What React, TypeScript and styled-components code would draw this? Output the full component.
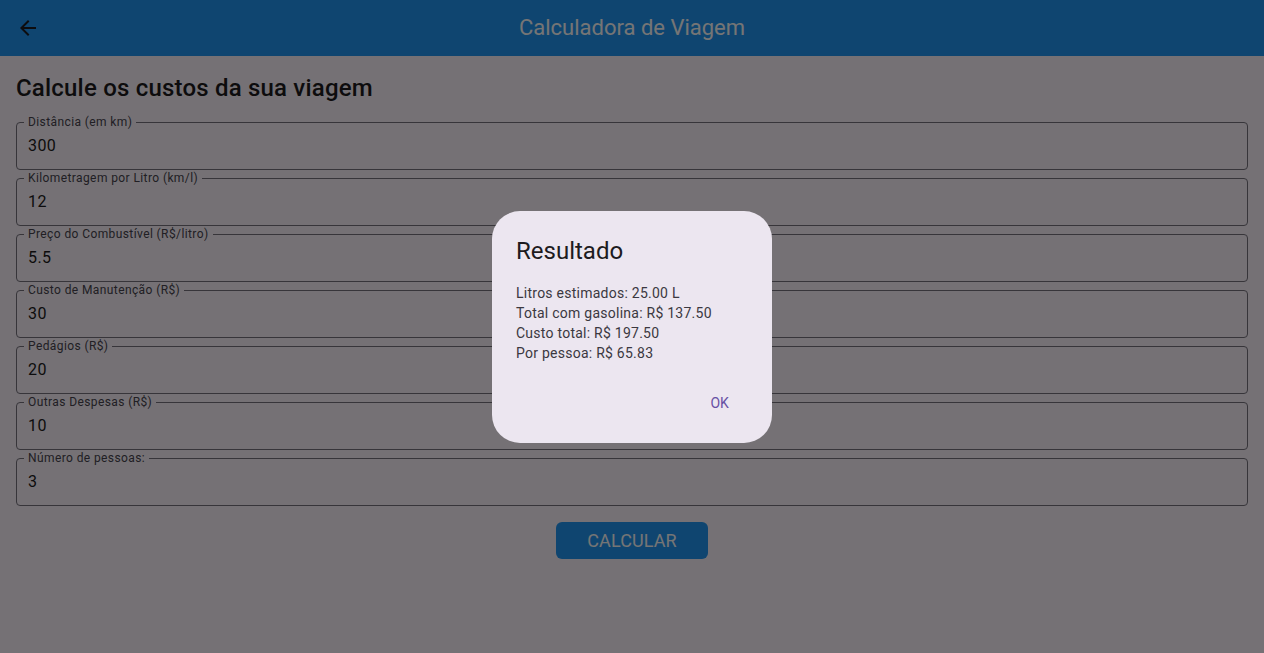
import React from "react";
import styled, { createGlobalStyle } from "styled-components";

const Global = createGlobalStyle`
  html, body { margin: 0; padding: 0; }
  body { font-family: Roboto, "Noto Sans", sans-serif; background: #fef7ff; }
  * { box-sizing: border-box; }
`;

const Page = styled.div`
  min-height: 100vh;
  background: #fef7ff;
  display: flex;
  flex-direction: column;
`;

const AppBar = styled.header`
  height: 56px;
  background: #2196f3;
  display: grid;
  grid-template-columns: 56px 1fr 56px;
  align-items: center;
`;

const BackButton = styled.div`
  width: 56px;
  height: 56px;
  display: flex;
  align-items: center;
  justify-content: center;
  color: #1d1b20;
`;

const AppTitle = styled.h1`
  margin: 0;
  text-align: center;
  font-size: 22px;
  font-weight: 400;
  line-height: 28px;
  color: #ffffff;
`;

const Content = styled.main`
  padding: 16px 16px 16px;
  display: flex;
  flex-direction: column;
`;

const Heading = styled.h2`
  margin: 0 0 10px;
  font-size: 24px;
  font-weight: 500;
  line-height: 32px;
  letter-spacing: 0.2px;
  color: #1d1b20;
`;

const Form = styled.div`
  display: flex;
  flex-direction: column;
`;

const Field = styled.fieldset`
  margin: 0;
  padding: 0 7px;
  border: 1px solid #79747e;
  border-radius: 4px;
`;

const Label = styled.legend`
  padding: 0 4px;
  font-size: 12px;
  line-height: 16px;
  letter-spacing: 0.4px;
  color: #49454f;
`;

const Value = styled.div`
  height: 39px;
  padding: 4px 4px 11px;
  font-size: 16px;
  line-height: 24px;
  letter-spacing: 0.4px;
  color: #1d1b20;
`;

const Actions = styled.div`
  display: flex;
  justify-content: center;
  margin-top: 16px;
`;

const PrimaryButton = styled.button`
  height: 37px;
  width: 152px;
  border: none;
  border-radius: 6px;
  background: #2196f3;
  color: #ffffff;
  font-family: Roboto, sans-serif;
  font-size: 18px;
  font-weight: 400;
  letter-spacing: 0.1px;
  padding: 0;
`;

const Barrier = styled.div`
  position: fixed;
  inset: 0;
  background: rgba(0, 0, 0, 0.54);
  display: flex;
  align-items: center;
  justify-content: center;
`;

const Dialog = styled.div`
  width: 280px;
  height: 232px;
  background: #ece6f0;
  border-radius: 28px;
  padding: 24px 24px 20px;
  display: flex;
  flex-direction: column;
`;

const DialogTitle = styled.h3`
  margin: 0 0 16px;
  font-size: 24px;
  font-weight: 400;
  line-height: 32px;
  color: #1d1b20;
`;

const DialogBody = styled.div`
  font-size: 14px;
  line-height: 20px;
  letter-spacing: 0.25px;
  color: #3b3840;
`;

const DialogActions = styled.div`
  margin-top: auto;
  display: flex;
  justify-content: flex-end;
`;

const TextButton = styled.button`
  height: 40px;
  border: none;
  background: transparent;
  padding: 0 19px 0 12px;
  font-family: Roboto, sans-serif;
  font-size: 14px;
  font-weight: 400;
  letter-spacing: 0.1px;
  color: #6750a4;
`;

const fields = [
  { label: "Distância (em km)", value: "300" },
  { label: "Kilometragem por Litro (km/l)", value: "12" },
  { label: "Preço do Combustível (R$/litro)", value: "5.5" },
  { label: "Custo de Manutenção (R$)", value: "30" },
  { label: "Pedágios (R$)", value: "20" },
  { label: "Outras Despesas (R$)", value: "10" },
  { label: "Número de pessoas:", value: "3" },
];

const results = [
  "Litros estimados: 25.00 L",
  "Total com gasolina: R$ 137.50",
  "Custo total: R$ 197.50",
  "Por pessoa: R$ 65.83",
];

export default function App() {
  return (
    <>
      <Global />
      <Page>
        <AppBar>
          <BackButton>
            <svg width="24" height="24" viewBox="0 0 24 24" fill="currentColor">
              <path d="M20 11H7.83l5.59-5.59L12 4l-8 8 8 8 1.41-1.41L7.83 13H20v-2z" />
            </svg>
          </BackButton>
          <AppTitle>Calculadora de Viagem</AppTitle>
          <div />
        </AppBar>
        <Content>
          <Heading>Calcule os custos da sua viagem</Heading>
          <Form>
            {fields.map((f) => (
              <Field key={f.label}>
                <Label>{f.label}</Label>
                <Value>{f.value}</Value>
              </Field>
            ))}
          </Form>
          <Actions>
            <PrimaryButton>CALCULAR</PrimaryButton>
          </Actions>
        </Content>
      </Page>
      <Barrier>
        <Dialog>
          <DialogTitle>Resultado</DialogTitle>
          <DialogBody>
            {results.map((r) => (
              <div key={r}>{r}</div>
            ))}
          </DialogBody>
          <DialogActions>
            <TextButton>OK</TextButton>
          </DialogActions>
        </Dialog>
      </Barrier>
    </>
  );
}
